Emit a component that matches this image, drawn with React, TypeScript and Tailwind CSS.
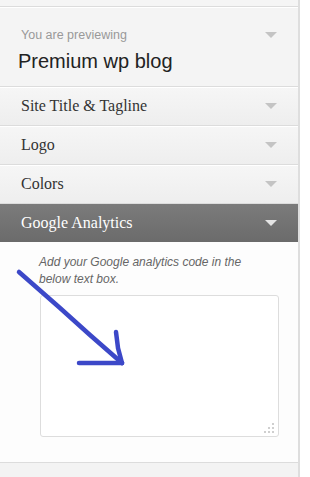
import React from "react";

const serif = { fontFamily: '"Liberation Serif", "Times New Roman", serif' };

function Caret({ light = false }: { light?: boolean }) {
  return (
    <svg width="12" height="6" viewBox="0 0 12 6" className="shrink-0">
      <polygon points="0,0 12,0 6,6" fill={light ? "#e4e4e4" : "#c4c4c4"} />
    </svg>
  );
}

function Row({ title }: { title: string }) {
  return (
    <div className="flex h-[39px] items-center justify-between border-b border-[#dcdcdc] bg-gradient-to-b from-[#f6f6f6] to-[#eeeeee] pl-[21px] pr-[21px] shadow-[inset_0_1px_0_#fff]">
      <span className="text-[16px] leading-none text-[#333]" style={serif}>
        {title}
      </span>
      <Caret />
    </div>
  );
}

export default function App() {
  return (
    <div className="relative h-[477px] w-[310px] overflow-hidden bg-white font-['Liberation_Sans',Arial,sans-serif]">
      <div className="flex h-full w-[300px] flex-col border-r-2 border-[#dedede] bg-[#f3f3f3]">
        <div className="h-[7px] shrink-0 border-b border-[#dcdcdc] bg-[#f5f5f5]" />

        {/* preview header */}
        <div className="flex h-[80px] shrink-0 flex-col border-b border-[#dcdcdc] bg-[#f4f4f4] pl-[18px] pr-[21px] pt-[20px] shadow-[inset_0_1px_0_#fff]">
          <div className="flex items-center justify-between pl-[3px]">
            <span className="text-[12.5px] leading-[16px] text-[#999]">You are previewing</span>
            <Caret />
          </div>
          <div className="mt-[6px] text-[20px] leading-[24px] text-[#222]">Premium wp blog</div>
        </div>

        <Row title="Site Title & Tagline" />
        <Row title="Logo" />
        <Row title="Colors" />

        {/* open section */}
        <div className="flex h-[38px] shrink-0 items-center justify-between bg-gradient-to-b from-[#7b7b7b] to-[#6b6b6b] pl-[21px] pr-[21px]">
          <span className="text-[16px] leading-none text-white" style={serif}>
            Google Analytics
          </span>
          <Caret light />
        </div>

        <div className="h-[221px] shrink-0 border-b border-[#dcdcdc] bg-[#fdfdfd] pl-[39px] pr-[19px] pt-[12px]">
          <p className="max-w-[222px] text-[12px] italic leading-[17px] text-[#666]">
            Add your Google analytics code in the below text box.
          </p>
          <div className="relative ml-px mt-[7px] h-[142px] rounded-[3px] border border-[#dddddd] bg-white">
            <svg width="10" height="10" viewBox="0 0 10 10" className="absolute bottom-[3px] right-[4px]">
              <rect x="8" y="0" width="2" height="2" fill="#cfcfcf" />
              <rect x="4" y="4" width="2" height="2" fill="#cfcfcf" />
              <rect x="8" y="4" width="2" height="2" fill="#cfcfcf" />
              <rect x="0" y="8" width="2" height="2" fill="#cfcfcf" />
              <rect x="4" y="8" width="2" height="2" fill="#cfcfcf" />
              <rect x="8" y="8" width="2" height="2" fill="#cfcfcf" />
            </svg>
          </div>
        </div>

        <div className="flex-1 bg-[#f3f3f3]" />
      </div>

      {/* hand-drawn arrow */}
      <svg
        className="pointer-events-none absolute left-0 top-0"
        width="310"
        height="477"
        viewBox="0 0 310 477"
      >
        <g stroke="#3c48c8" strokeWidth="4.5" strokeLinecap="round" fill="none">
          <path d="M19 272 L60 308 L90 335 L122 363" />
          <path d="M116 332 L118 348 L122 363" />
          <path d="M79 363 L122 363" />
        </g>
      </svg>
    </div>
  );
}
